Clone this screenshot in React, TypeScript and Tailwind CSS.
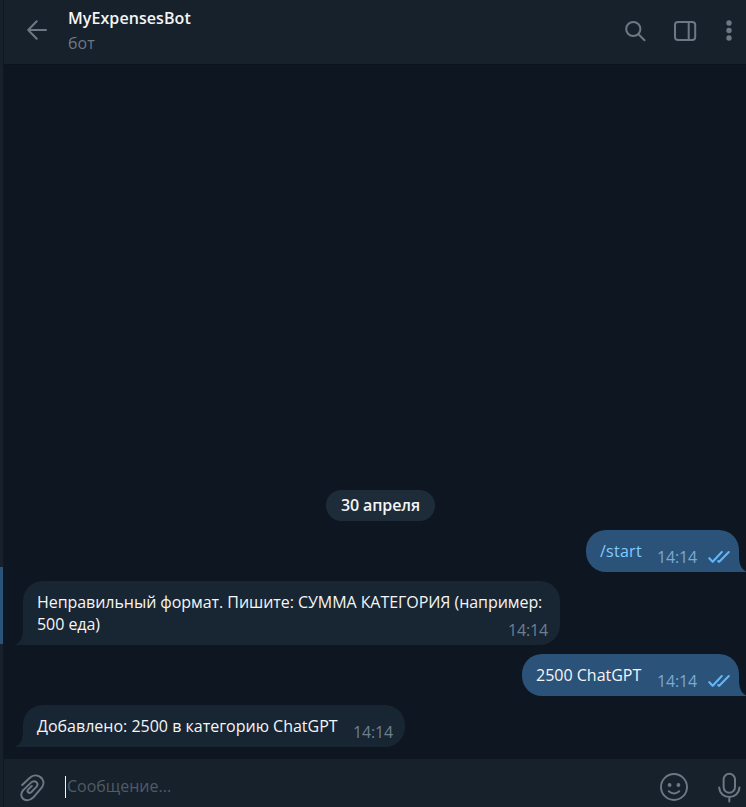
import React from "react";

function Ticks() {
  return (
    <svg className="ml-[11px] block shrink-0" width="22" height="14" viewBox="0 0 22 14" fill="none" stroke="#64b5f7" strokeWidth="2.1" strokeLinecap="round" strokeLinejoin="round">
      <path d="M1.3 8.2 4.7 11.8 13.8 2" />
      <path d="M10.2 11.1 11.2 11.8 20.8 2" />
    </svg>
  );
}

type BubbleProps = {
  own?: boolean;
  size: string;
  time: string;
  children: React.ReactNode;
};

function Bubble({ own, size, time, children }: BubbleProps) {
  return (
    <div className={`relative flex shrink-0 justify-between ${size} ${own ? "mr-[7px] self-end rounded-[20px] rounded-br-none bg-[#2b5278] pr-[9px]" : "ml-[19px] self-start rounded-[20px] rounded-bl-none bg-[#182533] pr-3"} pl-3.5 pt-2.5`}>
      <div className="whitespace-nowrap text-[16px] leading-[22px] text-[#f5f5f5]">{children}</div>
      <div className={`flex items-center self-end pb-[4px] text-[16px] leading-[22px] ${own ? "text-[#7da8d3]" : "text-[#6d7f8f]"}`}>
        <span className="tracking-[-0.15px]">{time}</span>
        {own && <Ticks />}
      </div>
      {own ? (
        <svg className="absolute -right-[7px] bottom-0" width="7" height="16" viewBox="0 0 7 16" fill="#2b5278">
          <path d="M0 0C0 8 2 12.5 6.5 15Q7.5 16 6 16H0Z" />
        </svg>
      ) : (
        <svg className="absolute -left-[7px] bottom-0" width="7" height="16" viewBox="0 0 7 16" fill="#182533">
          <path d="M7 0C7 8 5 12.5 .5 15Q-.5 16 1 16H7Z" />
        </svg>
      )}
    </div>
  );
}

function Header() {
  return (
    <header className="flex h-[65px] shrink-0 border-b border-[#0c131b] bg-[#17212b] text-[#6c7883]">
      <svg className="ml-[23px] mt-[20px] shrink-0" width="20" height="20" viewBox="0 0 20 20" fill="none" stroke="currentColor" strokeWidth="2" strokeLinecap="round" strokeLinejoin="round">
        <path d="M19 10H1.2M9.7 1.2 1.2 10l8.5 8.8" />
      </svg>
      <div className="ml-[21px] mt-[7px] flex-1">
        <div className="text-[16px] font-semibold leading-[22px] tracking-[0.08px] text-[#f5f5f5]">MyExpensesBot</div>
        <div className="mt-[3px] text-[16px] leading-[22px]">бот</div>
      </div>
      <svg className="mt-[20px] shrink-0" width="22" height="22" viewBox="0 0 22 22" fill="none" stroke="currentColor" strokeWidth="2" strokeLinecap="round">
        <circle cx="8.3" cy="9" r="7.1" />
        <path d="m13.5 14.3 6 6" />
      </svg>
      <svg className="ml-[27px] mt-[20px] shrink-0" width="24" height="22" viewBox="0 0 24 22" fill="none" stroke="currentColor" strokeWidth="2">
        <rect x="1" y="1.9" width="20.2" height="18.2" rx="3" />
        <path d="M14.7 2v18" />
      </svg>
      <svg className="ml-[28px] mr-[14px] mt-[19px] shrink-0" width="6" height="24" viewBox="0 0 6 24" fill="currentColor">
        <circle cx="3" cy="4" r="2.7" />
        <circle cx="3" cy="11.5" r="2.7" />
        <circle cx="3" cy="19" r="2.7" />
      </svg>
    </header>
  );
}

function Composer() {
  return (
    <footer className="flex h-[49px] shrink-0 border-t border-[#0e1621] bg-[#17212b] text-[#6c7883]">
      <svg className="ml-[16px] mt-[14px] shrink-0" width="26" height="30" viewBox="0 0 26 30" fill="none" stroke="currentColor" strokeWidth="2" strokeLinecap="round" strokeLinejoin="round">
        <path d="M2.2 12 9.6 5C16.8-1.6 27.4 6.2 21.9 14.4L13.4 24.3C6.6 31.2-2.6 24.4 3 17.4L11 9.6C15 6.2 19.2 10 16.6 13.6L11.2 19.2C8.8 21 6.4 18.5 8.3 16.4L11.8 13" />
      </svg>
      <div className="ml-[19px] mt-[17px] h-[22px] w-px bg-[#f5f5f5]" />
      <div className="ml-px mt-[16px] flex-1 text-[16px] leading-[22px] text-[#4f5b67]">Сообщение...</div>
      <svg className="mt-[14px] shrink-0" width="29" height="29" viewBox="0 0 29 29" fill="none" stroke="currentColor" strokeWidth="1.9" strokeLinecap="round">
        <circle cx="14" cy="14" r="13" />
        <circle cx="9.6" cy="12" r="1.9" fill="currentColor" stroke="none" />
        <circle cx="18.4" cy="12" r="1.9" fill="currentColor" stroke="none" />
        <path d="M8.7 18.2Q14 22.6 19.3 18.2" />
      </svg>
      <svg className="ml-[29px] mr-[5px] mt-[13px] shrink-0" width="23" height="31" viewBox="0 0 23 31" fill="none" stroke="currentColor" strokeWidth="2" strokeLinecap="round">
        <rect x="5.6" y="1.8" width="11.4" height="19" rx="5.7" />
        <path d="M1.2 15.5C1.6 21.5 6 25 11.3 25S21 21.5 21.4 15.5M11.3 25v4.5" />
      </svg>
    </footer>
  );
}

export default function App() {
  return (
    <div className="flex h-[807px] w-[746px] overflow-hidden bg-[#0e1621] font-['Open_Sans','Noto_Sans',sans-serif]">
      <aside className="w-[4px] shrink-0 border-r border-[#101922] bg-[#17212b] pt-[567px]">
        <div className="h-[77px] w-[3px] bg-[#2b5278]" />
      </aside>
      <div className="flex min-w-0 flex-1 flex-col">
        <Header />
        <main className="flex min-h-0 flex-1 flex-col justify-end gap-[9px] pb-[11px]">
          <div className="ml-[11px] flex h-[31px] w-[109px] shrink-0 items-center justify-center self-center rounded-full bg-[#1e2c3a] pb-px text-[16px] font-semibold leading-[22px] tracking-[-0.1px] text-[#f5f5f5]">30 апреля</div>
          <Bubble own size="h-[42px] w-[153px]" time="14:14"><span className="tracking-[0.25px] text-[#83caff]">/start</span></Bubble>
          <Bubble size="h-[64px] w-[537px]" time="14:14">
            <div className="w-[471px] tracking-[-0.055px]">Неправильный формат. Пишите: СУММА КАТЕГОРИЯ (например:<br />500 еда)</div>
          </Bubble>
          <Bubble own size="h-[42px] w-[217px]" time="14:14">2500 ChatGPT</Bubble>
          <Bubble size="h-[42px] w-[382px]" time="14:14">Добавлено: 2500 в категорию ChatGPT</Bubble>
        </main>
        <Composer />
      </div>
    </div>
  );
}
